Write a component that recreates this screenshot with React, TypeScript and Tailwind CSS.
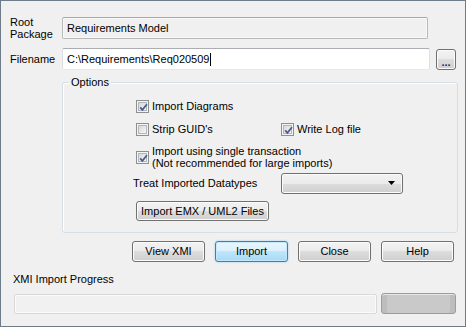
import React from "react";

const btn =
  "flex items-center justify-center rounded-[3px] border border-[#707070] bg-[linear-gradient(#f2f2f2,#ebebeb_50%,#dddddd_50%,#cfcfcf)] shadow-[inset_0_0_0_1px_#fcfcfc]";

function Check({ checked }: { checked: boolean }) {
  return (
    <div className="relative w-[13px] h-[13px] shrink-0 border border-[#8e8f8f] bg-[#f4f4f4] p-[1px]">
      <div className="w-full h-full border border-[#b2b7be] bg-[linear-gradient(135deg,#d8d8d8,#f6f6f6)]" />
      {checked && (
        <svg className="absolute inset-0" width="13" height="13" viewBox="0 0 13 13">
          <path d="M3.2 6.4 L5.4 8.9 L9.9 3.2" fill="none" stroke="#4a5e8c" strokeWidth="1.8" />
        </svg>
      )}
    </div>
  );
}

export default function App() {
  return (
    <div
      className="w-[466px] h-[327px] bg-[#f0f0f0] border border-[#6e7c8a] text-[11px] leading-[13px] text-black flex flex-col pl-[9px]"
      style={{ fontFamily: '"Liberation Sans", Arial, sans-serif' }}
    >
      {/* Root Package */}
      <div className="flex items-start mt-[16px] h-[22px]">
        <div className="w-[52px] leading-[12px] mt-[-1px]">
          Root
          <br />
          Package
        </div>
        <div className="w-[366px] h-[22px] px-[4px] flex items-center rounded-[2px] border border-[#b9b9b9] border-t-[#a9a9a9] bg-[#f0f0f0] shadow-[inset_0_0_0_1px_#f8f8f8]">
          Requirements Model
        </div>
      </div>

      {/* Filename */}
      <div className="flex items-center mt-[9px] h-[22px]">
        <div className="w-[52px]">Filename</div>
        <div className="w-[368px] h-[22px] px-[4px] flex items-center rounded-[2px] bg-white border border-[#dbdfe6] border-t-[#abadb3] border-b-[#e3e9ef]">
          <span>C:\Requirements\Req020509</span>
          <span className="w-[1px] h-[13px] bg-black ml-[1px]" />
        </div>
        <div className={`${btn} ml-[6px] w-[20px] h-[21px] items-end pb-[2px] text-[11px] leading-[9px] text-[#1b2a6b] font-bold`}>
          ...
        </div>
      </div>

      {/* Options group */}
      <div className="relative ml-[52px] mt-[12px] w-[396px] h-[151px] rounded-[3px] border border-[#d5dfe5] shadow-[inset_1px_1px_0_#ffffff]">
        <span className="absolute left-[6px] top-[-7px] px-[2px] bg-[#f0f0f0]">Options</span>
        <div className="flex flex-col pl-[73px] pt-[17px]">
          <div className="flex items-center gap-[3px] h-[13px]">
            <Check checked />
            <span>Import Diagrams</span>
          </div>
          <div className="flex items-center mt-[10px] h-[13px]">
            <div className="flex items-center gap-[3px] w-[145px]">
              <Check checked={false} />
              <span>Strip GUID's</span>
            </div>
            <div className="flex items-center gap-[3px]">
              <Check checked />
              <span>Write Log file</span>
            </div>
          </div>
          <div className="flex items-center gap-[3px] mt-[9px]">
            <Check checked />
            <span className="leading-[12px]">
              Import using single transaction
              <br />
              (Not recommended for large imports)
            </span>
          </div>
          <div className="flex items-center mt-[4px]">
            <div className="w-[148px] ml-[-3px]">Treat Imported Datatypes</div>
            <div className={`${btn} w-[122px] h-[21px] justify-end pr-[6px]`}>
              <svg width="8" height="5" viewBox="0 0 8 5">
                <path d="M0 0 H7 L3.5 4 Z" fill="#000" />
              </svg>
            </div>
          </div>
          <div className={`${btn} mt-[7px] w-[133px] h-[20px]`}>Import EMX / UML2 Files</div>
        </div>
      </div>

      {/* Buttons */}
      <div className="flex items-center gap-[10px] ml-[122px] mt-[8px]">
        <div className={`${btn} w-[73px] h-[21px]`}>View XMI</div>
        <div className="flex items-center justify-center w-[73px] h-[21px] rounded-[3px] border border-[#3c7fb1] bg-[linear-gradient(#eaf6fd,#d9f0fc_50%,#bee6fd_50%,#a7d9f5)] shadow-[inset_0_0_0_1px_#c5e9fb,0_0_2px_#8ec7ec]">
          Import
        </div>
        <div className={`${btn} w-[73px] h-[21px]`}>Close</div>
        <div className={`${btn} w-[73px] h-[21px]`}>Help</div>
      </div>

      {/* Progress */}
      <div className="ml-[3px] mt-[11px]">XMI Import Progress</div>
      <div className="flex items-center gap-[4px] ml-[4px] mt-[7px]">
        <div className="w-[363px] h-[20px] rounded-[2px] border border-[#d9d9d9] bg-[#f1f1f1] shadow-[inset_0_0_0_1px_#fbfbfb]" />
        <div className="w-[75px] h-[21px] rounded-[3px] border border-[#9c9c9c] bg-[#c9c9c9] shadow-[inset_0_1px_0_#e6e6e6,inset_5px_0_0_#bdbdbd,inset_-5px_0_0_#bdbdbd]" />
      </div>
    </div>
  );
}
